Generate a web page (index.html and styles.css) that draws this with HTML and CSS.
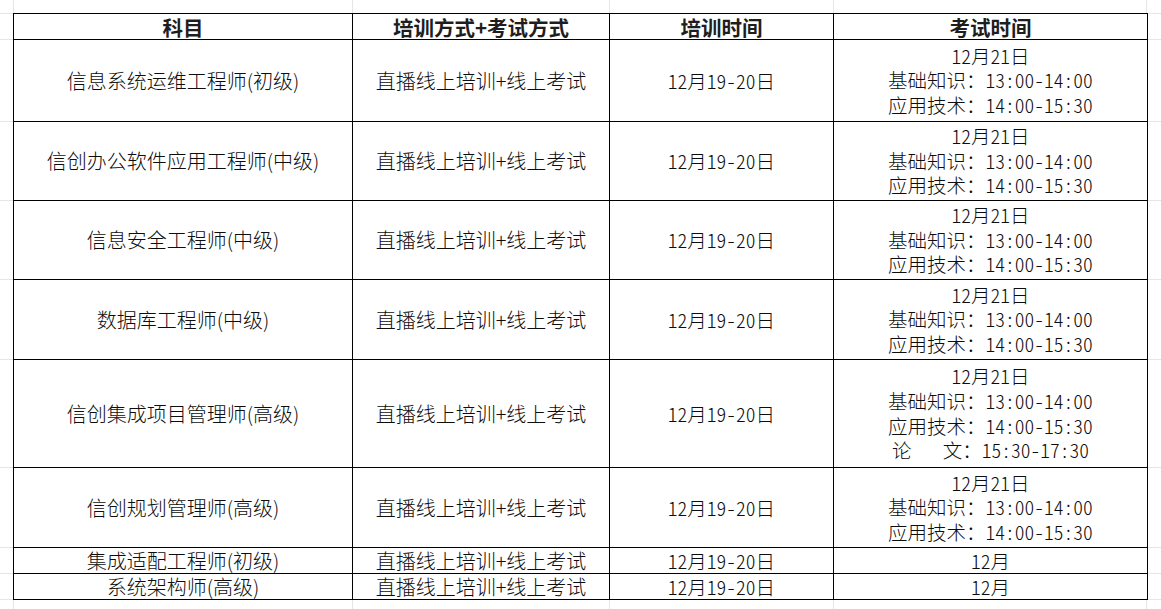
FILE: index.html
```html
<!DOCTYPE html>
<html lang="zh-CN">
<head>
<meta charset="utf-8">
<title>考试安排</title>
<link rel="stylesheet" href="styles.css">
</head>
<body>
<table class="grid">
  <colgroup>
    <col class="c1"><col class="c2"><col class="c3"><col class="c4">
  </colgroup>
  <thead>
    <tr class="r26"><th>科目</th><th>培训方式+考试方式</th><th>培训时间</th><th>考试时间</th></tr>
  </thead>
  <tbody>
    <tr class="r82">
      <td class="subj">信息系统运维工程师(初级)</td>
      <td class="mode">直播线上培训+线上考试</td>
      <td class="date">12月19-20日</td>
      <td class="exam">12月21日<br>基础知识：13:00-14:00<br>应用技术：14:00-15:30</td>
    </tr>
    <tr class="r79">
      <td class="subj">信创办公软件应用工程师(中级)</td>
      <td class="mode">直播线上培训+线上考试</td>
      <td class="date">12月19-20日</td>
      <td class="exam">12月21日<br>基础知识：13:00-14:00<br>应用技术：14:00-15:30</td>
    </tr>
    <tr class="r79">
      <td class="subj">信息安全工程师(中级)</td>
      <td class="mode">直播线上培训+线上考试</td>
      <td class="date">12月19-20日</td>
      <td class="exam">12月21日<br>基础知识：13:00-14:00<br>应用技术：14:00-15:30</td>
    </tr>
    <tr class="r80">
      <td class="subj">数据库工程师(中级)</td>
      <td class="mode">直播线上培训+线上考试</td>
      <td class="date">12月19-20日</td>
      <td class="exam">12月21日<br>基础知识：13:00-14:00<br>应用技术：14:00-15:30</td>
    </tr>
    <tr class="r108">
      <td class="subj">信创集成项目管理师(高级)</td>
      <td class="mode">直播线上培训+线上考试</td>
      <td class="date">12月19-20日</td>
      <td class="exam">12月21日<br>基础知识：13:00-14:00<br>应用技术：14:00-15:30<br>论<span class="gap"></span>文：15:30-17:30</td>
    </tr>
    <tr class="r80">
      <td class="subj">信创规划管理师(高级)</td>
      <td class="mode">直播线上培训+线上考试</td>
      <td class="date">12月19-20日</td>
      <td class="exam">12月21日<br>基础知识：13:00-14:00<br>应用技术：14:00-15:30</td>
    </tr>
    <tr class="r26 tight">
      <td class="subj">集成适配工程师(初级)</td>
      <td class="mode">直播线上培训+线上考试</td>
      <td class="date">12月19-20日</td>
      <td class="exam">12月</td>
    </tr>
    <tr class="r26 tight">
      <td class="subj">系统架构师(高级)</td>
      <td class="mode">直播线上培训+线上考试</td>
      <td class="date">12月19-20日</td>
      <td class="exam">12月</td>
    </tr>
  </tbody>
</table>
</body>
</html>
```

FILE: styles.css
```css
html {
  height: 100%;
}

body {
  margin: 0;
  min-height: 100%;
  box-sizing: border-box;
  padding: 13px 0 0 13px;
  background-color: #ffffff;
  background-repeat: no-repeat;
  background-image:
    linear-gradient(#e6e6e6, #e6e6e6), linear-gradient(#e6e6e6, #e6e6e6),
    linear-gradient(#e6e6e6, #e6e6e6), linear-gradient(#e6e6e6, #e6e6e6),
    linear-gradient(#e6e6e6, #e6e6e6), linear-gradient(#e6e6e6, #e6e6e6),
    linear-gradient(#e6e6e6, #e6e6e6), linear-gradient(#e6e6e6, #e6e6e6),
    linear-gradient(#e6e6e6, #e6e6e6), linear-gradient(#e6e6e6, #e6e6e6),
    linear-gradient(#e6e6e6, #e6e6e6), linear-gradient(#e6e6e6, #e6e6e6),
    linear-gradient(#e6e6e6, #e6e6e6), linear-gradient(#e6e6e6, #e6e6e6),
    linear-gradient(#e6e6e6, #e6e6e6);
  background-size:
    100% 1px, 100% 1px, 100% 1px, 100% 1px, 100% 1px,
    100% 1px, 100% 1px, 100% 1px, 100% 1px, 100% 1px,
    1px 100%, 1px 100%, 1px 100%, 1px 100%, 1px 100%;
  background-position:
    0 13px, 0 39px, 0 121px, 0 200px, 0 279px,
    0 359px, 0 467px, 0 547px, 0 573px, 0 599px,
    13px 0, 352px 0, 609px 0, 833px 0, 1146px 0;
  font-family: "Noto Sans CJK SC", "Noto Sans", sans-serif;
  color: #1e1e1e;
}

.grid {
  border-collapse: collapse;
  table-layout: fixed;
  width: 1134px;
  background: #ffffff;
}

.c1 { width: 339px; }
.c2 { width: 257px; }
.c3 { width: 224px; }
.c4 { width: 314px; }

.grid th,
.grid td {
  border: 1px solid #000000;
  padding: 0;
  text-align: center;
  vertical-align: middle;
  white-space: nowrap;
}

.grid th {
  font-size: 20.5px;
  font-weight: 700;
  line-height: 24px;
}

.grid td {
  font-weight: 300;
  color: #0d0d0d;
}

.r26 { height: 26px; }
.r79 { height: 79px; }
.r80 { height: 80px; }
.r82 { height: 82px; }
.r108 { height: 108px; }

.subj {
  font-size: 20px;
  line-height: 24px;
}

.mode {
  font-size: 20px;
  line-height: 24px;
}

.date {
  font-feature-settings: "hwid" 1;
  font-size: 19.5px;
  line-height: 24px;
}

.exam {
  font-feature-settings: "hwid" 1;
  font-size: 19.5px;
  line-height: 24.6px;
  padding-top: 3px;
}

.gap {
  display: inline-block;
  width: 1.6em;
}

.tight td {
  line-height: 22px;
  padding-top: 0;
}
```
